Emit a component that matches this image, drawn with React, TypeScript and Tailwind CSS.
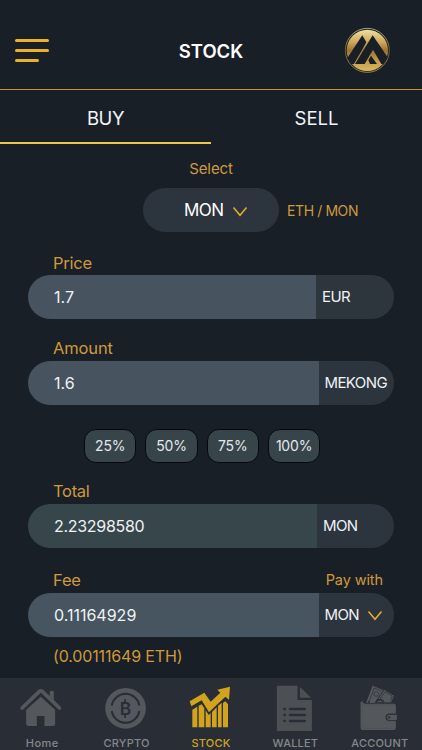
import type { ReactNode } from "react";

const font = "font-['Inter','Liberation_Sans',sans-serif]";

function Logo() {
  return (
    <svg viewBox="0 0 168 168" className="-mt-0.5 h-14 w-14">
      <defs>
        <linearGradient id="gold" x1="0" y1="0" x2="0" y2="1">
          <stop offset="0" stopColor="#efe0a0" />
          <stop offset="0.3" stopColor="#cda95c" />
          <stop offset="0.5" stopColor="#9c752f" />
          <stop offset="0.75" stopColor="#c39b45" />
          <stop offset="1" stopColor="#d9b960" />
        </linearGradient>
      </defs>
      <circle cx="82" cy="85" r="66" fill="none" stroke="url(#gold)" strokeWidth="2" />
      <circle cx="82" cy="85" r="62" fill="url(#gold)" />
      <g fill="#181f27">
        <path d="M67 40 L22 108 L34 127 L42 126 L79 61 Z" />
        <path d="M98 40 L45 126 L74 126 L99 83 L124 126 L130 127 L143 106 Z" />
        <path d="M93 101 L85 115 L90 126 L111 126 Z" />
      </g>
    </svg>
  );
}

function Chevron() {
  return (
    <svg viewBox="0 0 16 12" className="mt-[2px] h-3 w-4" fill="none" stroke="#e8ad32" strokeWidth="1.5">
      <path d="M1.5 1.5 L8 9.3 L14.5 1.5" />
    </svg>
  );
}

function HomeIcon() {
  return (
    <svg viewBox="57.6 45 138 138" className="h-[46px] w-[46px]" fill="#54585c">
      <path d="M150 66 Q150 62 156 62 Q162 62 162 66 V96 L150 85 Z" />
      <path d="M67 114 L118 65 Q123 60 128 65 L179 114" fill="none" stroke="#54585c" strokeWidth="11" strokeLinecap="round" strokeLinejoin="round" />
      <path d="M123 80 L166 119 V162 Q166 168 160 168 H134 V138 H111 V168 H86 Q79 168 79 162 V119 Z" />
    </svg>
  );
}

function CryptoIcon() {
  return (
    <svg viewBox="311.8 45 138 138" className="h-[46px] w-[46px]">
      <circle cx="376.5" cy="115" r="61" fill="#54585c" />
      <g fill="none" stroke="#292e36" strokeWidth="6">
        <path d="M335 107 A42 42 0 0 1 418 107" />
        <path d="M335 123 A42 42 0 0 0 418 123" />
        <path d="M375 87 V96 M375 134 V144" strokeWidth="5" />
      </g>
      <text x="376.5" y="134" textAnchor="middle" fontSize="52" fontWeight="600" fill="#292e36" className={font}>B</text>
    </svg>
  );
}

function StockIcon() {
  return (
    <svg viewBox="114 45 138 138" className="h-[46px] w-[46px]" fill="#d2a41d">
      <path d="M127 119 L142 110 V172 H127 Z M146 107 L155 103 L163 115 V172 H146 Z M167 121 L176 135 L182 129 V172 H167 Z M186 126 L200 112 V172 H186 Z M204 108 L215 98 V172 H204 Z M219 99 L226 94 L234 103 V172 H219 Z" />
      <path d="M119 94 L163 68 L182 95 L211 68 L202 59 L240 50 L237 89 L226 80 L177 127 L155 91 L124 109 Z" />
    </svg>
  );
}

function WalletIcon() {
  return (
    <svg viewBox="31.2 45 138 138" className="h-[46px] w-[46px]" fill="#4c4f53">
      <path d="M46 47 H108 V90 H151 V183 H46 Z" />
      <path d="M115 50 L148 83 H115 Z" />
      <g stroke="#292e36" strokeWidth="7" strokeLinecap="round">
        <path d="M85 117 H130 M85 135 H130 M85 153 H130 M68 117 H70 M68 135 H70 M68 153 H70" />
      </g>
    </svg>
  );
}

function AccountIcon() {
  return (
    <svg viewBox="284.4 45 138 138" className="h-[46px] w-[46px]" fill="#54585c">
      <path d="M312 98 L331 47 L365 61 L350 100 Z" />
      <path d="M339 98 L366 58 L397 77 L387 99 Z" stroke="#292e36" strokeWidth="3" />
      <g fill="none" stroke="#292e36" strokeWidth="2">
        <path d="M321 94 L336 54 L358 63" />
        <circle cx="342" cy="72" r="7" />
        <path d="M350 92 L369 65 L390 78 L385 92" />
        <path d="M342 96 A12 12 0 0 1 364 96" strokeWidth="5" />
        <path d="M320 92 V99" strokeWidth="4" />
      </g>
      <path d="M295 98 Q295 93 302 93 Q300 100 308 101 H394 Q401 101 401 108 V132 H379 Q371 133 371 142 Q371 150 379 151 H401 V173 Q401 180 394 180 H302 Q295 180 295 173 Z" />
      <path d="M300 105 H396 M300 105 V175 H396" fill="none" stroke="#44494e" strokeWidth="2" strokeDasharray="3 3" />
      <path d="M404 134 H380 Q374 135 374 142 Q374 149 380 150 H404 Z" />
      <path d="M402 132 H379 Q371 133 371 142 Q371 151 379 152 H402" fill="none" stroke="#292e36" strokeWidth="2.5" />
      <circle cx="381" cy="142" r="3.5" fill="#292e36" />
    </svg>
  );
}

type FieldProps = { value: string; main: string; side: string; children: ReactNode };

function Field({ value, main, side, children }: FieldProps) {
  return (
    <div className="mx-7 flex h-11 overflow-hidden rounded-full text-[16px] text-[#f0f2f4]">
      <div className={`flex flex-1 items-center pl-[26px] ${main}`}>{value}</div>
      <div className={`flex items-center pl-[6px] text-[15px] tracking-[-0.6px] ${side}`}>{children}</div>
    </div>
  );
}

const tabs = [
  { label: "Home", icon: <HomeIcon />, style: "text-[#85888c] tracking-[0.4px]" },
  { label: "CRYPTO", icon: <CryptoIcon />, style: "text-[#85888c] tracking-[0.2px]" },
  { label: "STOCK", icon: <StockIcon />, style: "text-[#d2a41d] tracking-[0.2px]" },
  { label: "WALLET", icon: <WalletIcon />, style: "text-[#85888c] tracking-[0.2px]" },
  { label: "ACCOUNT", icon: <AccountIcon />, style: "text-[#85888c] tracking-[0.2px]" },
];

export default function App() {
  return (
    <div className={`flex h-[750px] w-[422px] flex-col overflow-hidden bg-[#181f27] text-[#d0993c] ${font}`}>
      <header className="flex h-[89px] shrink-0 items-center justify-between pt-[12px] pr-[26px] pl-[15px]">
        <div className="flex w-14 flex-col gap-[7px]">
          <span className="h-[3px] w-[34px] rounded-full bg-[#edb127]" />
          <span className="h-[3px] w-[34px] rounded-full bg-[#edb127]" />
          <span className="h-[3px] w-6 rounded-full bg-[#edb127]" />
        </div>
        <h1 className="pt-[2px] pl-[11px] text-[18.5px] font-semibold text-white">STOCK</h1>
        <Logo />
      </header>
      <div className="h-px shrink-0 bg-[#c3962d]" />

      <nav className="grid h-[54px] shrink-0 grid-cols-2 text-center text-[18.5px] leading-[52px] text-[#f4f5f6]">
        <div className="border-b-2 border-b-[#ecc945] pt-0.5 tracking-[-0.4px]">
          <span className="block h-[50px]">BUY</span>
        </div>
        <div className="h-[54px] pt-0.5">SELL</div>
      </nav>

      <div className="mt-[15px] h-5 shrink-0 text-center text-[15px] leading-5 tracking-[-0.1px]">Select</div>
      <div className="mt-[9px] flex h-11 shrink-0 items-center pl-[143px]">
        <div className="flex h-11 w-[136px] items-center gap-[8px] rounded-full bg-[#2c343e] pt-[2px] pl-[41px] text-[17px] tracking-[-0.5px] text-white">
          MON
          <Chevron />
        </div>
        <span className="pl-2 text-[14px] tracking-[-0.4px]">ETH / MON</span>
      </div>

      <div className="mt-[21px] h-[22px] shrink-0 pl-[53px] text-[16.5px] leading-5 tracking-[-0.25px]">Price</div>
      <div className="shrink-0">
        <Field value="1.7" main="bg-[#475460]" side="w-[78px] bg-[#2c363c]">EUR</Field>
      </div>

      <div className="mt-[19px] h-[23px] shrink-0 pl-[53px] text-[16.5px] leading-5 tracking-[-0.15px]">Amount</div>
      <div className="shrink-0">
        <Field value="1.6" main="bg-[#475460]" side="w-[75.5px] bg-[#2c343e]">MEKONG</Field>
      </div>

      <div className="mt-6 flex shrink-0 gap-[9px] pl-[84px] text-[14px] tracking-[-0.2px] text-[#e3e8ea]">
        {["25%", "50%", "75%", "100%"].map((p) => (
          <button key={p} className="h-[34px] w-[52.3px] rounded-[12px] border border-[#05090d] bg-[#37454b] pb-px">{p}</button>
        ))}
      </div>

      <div className="mt-[18px] h-[23px] shrink-0 pl-[53px] text-[16.5px] leading-5 tracking-[-0.3px]">Total</div>
      <div className="shrink-0">
        <Field value="2.23298580" main="bg-[#37464b] tracking-[-0.3px]" side="w-[77px] bg-[#2c343e]">MON</Field>
      </div>

      <div className="mt-[22px] flex h-[23px] shrink-0 justify-between pr-[39px] pl-[53px] text-[16.5px] leading-5 tracking-[-0.2px]">
        <span>Fee</span>
        <span className="text-[14.5px] tracking-[-0.1px]">Pay with</span>
      </div>
      <div className="shrink-0">
        <Field value="0.11164929" main="bg-[#465560]" side="w-[75.5px] gap-2 bg-[#2c343e]">
          MON
          <Chevron />
        </Field>
      </div>
      <div className="mt-[9px] h-5 shrink-0 pl-[53px] text-[16px] leading-5 tracking-[-0.15px]">(0.00111649 ETH)</div>

      <footer className="mt-auto grid h-[72px] shrink-0 grid-cols-5 bg-[#292e36] pt-[7px]">
        {tabs.map((t) => (
          <div key={t.label} className="flex flex-col items-center">
            {t.icon}
            <span className={`mt-[5px] text-[11px] leading-[14px] font-medium ${t.style}`}>{t.label}</span>
          </div>
        ))}
      </footer>
    </div>
  );
}
